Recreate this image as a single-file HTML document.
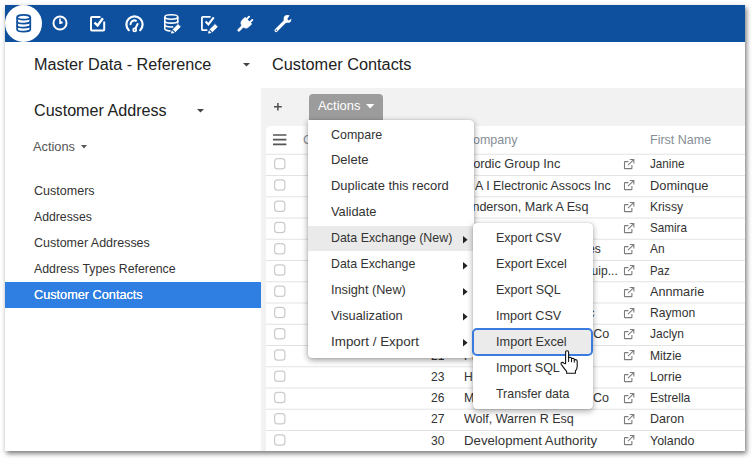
<!DOCTYPE html>
<html lang="en"><head><meta charset="utf-8"><title>Customer Contacts</title>
<style>
html,body{margin:0;padding:0;background:#fff;}
body{width:754px;height:460px;position:relative;overflow:hidden;font-family:"Liberation Sans",Arial,sans-serif;}
.t{position:absolute;white-space:nowrap;line-height:1;transform-origin:0 50%;display:block;}
.r{position:absolute;}
svg{position:absolute;overflow:visible;}
.clip{position:absolute;overflow:hidden;}
</style></head><body>
<div class="r" style="left:5px;top:5px;width:740px;height:446px;background:#fff;box-shadow:1.6px 2.2px 5px .6px rgba(0,0,0,.55);"></div>
<div class="r" style="left:5px;top:5px;width:740px;height:36.6px;background:#0e4f9e;"></div>
<div class="r" style="left:5.1px;top:4.8px;width:36.8px;height:36.8px;border-radius:50%;background:#fff;"></div>
<svg style="left:15.9px;top:14.3px" width="15.4" height="18.6" viewBox="0 0 15.4 18.6">
<g fill="none" stroke="#0e4f9e" stroke-width="1.7">
<ellipse cx="7.7" cy="3.3" rx="6.6" ry="2.4"/>
<path d="M1.1 3.3V15.2C1.1 16.6 4 17.6 7.7 17.6S14.3 16.6 14.3 15.2V3.3"/>
<path d="M1.1 7.2C1.1 8.6 4 9.6 7.7 9.6S14.3 8.6 14.3 7.2M1.1 11.2C1.1 12.6 4 13.6 7.7 13.6S14.3 12.6 14.3 11.2"/>
</g></svg>
<svg style="left:52.1px;top:15.4px" width="16" height="16" viewBox="0 0 16 16">
<circle cx="8" cy="8" r="6.55" fill="none" stroke="#fff" stroke-width="2"/>
<path d="M7.2 3.4H8.8V6L11 7.1L10.3 8.5L8.4 8.9H7.2Z" fill="#fff"/>
</svg>
<svg style="left:90px;top:15px" width="16" height="17" viewBox="0 0 16 17">
<path d="M10.4 2H2Q1 2 1 3V14.4Q1 15.4 2 15.4H13.2Q14.2 15.4 14.2 14.4V6.6" fill="none" stroke="#fff" stroke-width="2"/>
<path d="M4.5 7.6L7.6 10.5L12.9 3.2" fill="none" stroke="#fff" stroke-width="2.4"/>
</svg>
<svg style="left:125px;top:15px" width="19" height="18" viewBox="0 0 19 18">
<path d="M3.8 15.2A8.1 8.1 0 1 1 15.2 15.2" fill="none" stroke="#fff" stroke-width="2.2" stroke-linecap="round"/>
<path d="M5.5 9.3A4 4 0 0 1 10.9 5.7" fill="none" stroke="#fff" stroke-width="2.1" stroke-linecap="round"/>
<path d="M9.7 14.9L12.6 9" fill="none" stroke="#fff" stroke-width="2" stroke-linecap="round"/>
<circle cx="9.7" cy="14.9" r="2.4" fill="#fff"/><circle cx="9.7" cy="14.9" r=".6" fill="#0e4f9e"/>
</svg>
<svg style="left:163.8px;top:14.3px" width="17.4" height="18.8" viewBox="0 0 17.4 18.8">
<path d="M.8 3C.8 1.6 3.7 .8 7.3 .8S13.8 1.6 13.8 3V9.4M.8 3V14.6C.8 16 3.4 16.9 6.6 17" fill="none" stroke="#fff" stroke-width="1.6"/>
<path d="M.8 3C.8 4.4 3.7 5.2 7.3 5.2S13.8 4.4 13.8 3M.8 6.9C.8 8.3 3.7 9.1 7.3 9.1S13.8 8.3 13.8 6.9M.8 10.8C.8 12.2 3.7 13 7.3 13Q8.4 13 9.2 12.9" fill="none" stroke="#fff" stroke-width="1.6"/>
<path d="M14 9.6L17.2 12.8L11.4 18.6L8.2 15.4Z" fill="#fff" stroke="#0e4f9e" stroke-width=".8"/>
<path d="M7.9 16.2L10.6 18.9L6.9 19.6Z" fill="#fff"/>
</svg>
<svg style="left:201px;top:15px" width="17.4" height="18.4" viewBox="0 0 17.4 18.4">
<path d="M9.6 1.9H1.9Q.9 1.9 .9 2.9V14.2Q.9 15.2 1.9 15.2H6.4" fill="none" stroke="#fff" stroke-width="1.8"/>
<path d="M4.6 6.6L7.4 9.4L12.8 2.4" fill="none" stroke="#fff" stroke-width="2.1"/>
<path d="M14 8.6L17.2 11.8L11.4 17.6L8.2 14.4Z" fill="#fff" stroke="#0e4f9e" stroke-width=".8"/>
<path d="M7.9 15.2L10.6 17.9L6.9 18.6Z" fill="#fff"/>
</svg>
<svg style="left:246px;top:23px" width="1" height="1" viewBox="0 0 1 1">
<g transform="rotate(45)">
<path d="M-2.3 -6.7V-3M2.3 -6.7V-3" stroke="#fff" stroke-width="1.9" stroke-linecap="round" fill="none"/>
<path d="M-4.7 -3.4H4.7V.6Q4.7 4.8 0 4.8Q-4.7 4.8 -4.7 .6Z" fill="#fff" stroke="#fff" stroke-width=".6" stroke-linejoin="round"/>
<path d="M0 4V10.2" stroke="#fff" stroke-width="2.7" stroke-linecap="round" fill="none"/>
</g></svg>
<svg style="left:273.6px;top:14.7px" width="17.6" height="17.4" viewBox="0 0 17.6 17.4">
<path d="M2.1 15.4L11.6 5.9" stroke="#fff" stroke-width="3.3" stroke-linecap="round" fill="none"/>
<circle cx="13.5" cy="3.9" r="3.9" fill="#fff"/>
<path d="M13.3 4.1L16.3 -.7L19.6 2.6L14.6 5.4Z" fill="#0e4f9e"/>
<circle cx="2.3" cy="15.2" r=".7" fill="#0e4f9e"/>
</svg>
<span class="t" style="top:56.96px;font-size:16px;color:#222;transform:scaleX(1.0121);left:34.40px;">Master Data - Reference</span>
<span class="t" style="top:102.56px;font-size:16px;color:#222;transform:scaleX(1.0075);left:34.40px;">Customer Address</span>
<span class="t" style="top:56.96px;font-size:16px;color:#222;transform:scaleX(1.0187);left:271.80px;">Customer Contacts</span>
<svg style="left:242.6px;top:63px" width="7" height="3.6" viewBox="0 0 7 3.6"><path d="M0 0H7L3.5 3.6Z" fill="#444"/></svg>
<svg style="left:197px;top:109.3px" width="7" height="3.6" viewBox="0 0 7 3.6"><path d="M0 0H7L3.5 3.6Z" fill="#444"/></svg>
<span class="t" style="top:140.20px;font-size:13px;color:#555;transform:scaleX(0.9852);left:33.30px;">Actions</span>
<svg style="left:81.3px;top:145.3px" width="6" height="3.4" viewBox="0 0 6 3.4"><path d="M0 0H6L3.0 3.4Z" fill="#555"/></svg>
<div class="r" style="left:5px;top:282px;width:256px;height:26px;background:#2f7ee1;"></div>
<span class="t" style="top:184.00px;font-size:13px;color:#333;transform:scaleX(0.9642);left:34.00px;">Customers</span>
<span class="t" style="top:210.00px;font-size:13px;color:#333;transform:scaleX(0.9411);left:34.00px;">Addresses</span>
<span class="t" style="top:236.00px;font-size:13px;color:#333;transform:scaleX(0.9597);left:34.00px;">Customer Addresses</span>
<span class="t" style="top:262.00px;font-size:13px;color:#333;transform:scaleX(0.9482);left:34.00px;">Address Types Reference</span>
<span class="t" style="top:288.00px;font-size:13px;color:#fff;transform:scaleX(0.9770);left:34.00px;text-shadow:0 0 .4px #fff;">Customer Contacts</span>
<div class="r" style="left:261px;top:88px;width:484px;height:363px;background:#f2f2f2;"></div>
<div class="r" style="left:266px;top:126px;width:479px;height:325px;background:#fff;border-radius:5px 0 0 0;"></div>
<svg style="left:274.2px;top:102.9px" width="7.8" height="7.4" viewBox="0 0 7.8 7.4"><path d="M0 3.7H7.8M3.9 0V7.4" stroke="#505050" stroke-width="1.5" fill="none"/></svg>
<svg style="left:273px;top:134.3px" width="13.4" height="12" viewBox="0 0 13.4 12"><path d="M0 1H13.4M0 5.7H13.4M0 10.4H13.4" stroke="#555" stroke-width="1.7" fill="none"/></svg>
<span class="t" style="top:132.90px;font-size:13px;color:#868e96;transform:scaleX(1.0000);left:302.90px;">Contact</span>
<span class="t" style="top:132.90px;font-size:13px;color:#868e96;transform:scaleX(0.9598);left:464.30px;">Company</span>
<span class="t" style="top:132.90px;font-size:13px;color:#868e96;transform:scaleX(0.9629);left:649.60px;">First Name</span>
<svg style="left:0;top:0" width="754" height="460" viewBox="0 0 754 460"><rect x="266" y="153.75" width="479" height="1" fill="#e3e3e3"/><rect x="266" y="175.00" width="479" height="1" fill="#e3e3e3"/><rect x="266" y="196.25" width="479" height="1" fill="#e3e3e3"/><rect x="266" y="217.50" width="479" height="1" fill="#e3e3e3"/><rect x="266" y="238.75" width="479" height="1" fill="#e3e3e3"/><rect x="266" y="260.00" width="479" height="1" fill="#e3e3e3"/><rect x="266" y="281.25" width="479" height="1" fill="#e3e3e3"/><rect x="266" y="302.50" width="479" height="1" fill="#e3e3e3"/><rect x="266" y="323.75" width="479" height="1" fill="#e3e3e3"/><rect x="266" y="345.00" width="479" height="1" fill="#e3e3e3"/><rect x="266" y="366.25" width="479" height="1" fill="#e3e3e3"/><rect x="266" y="387.50" width="479" height="1" fill="#e3e3e3"/><rect x="266" y="408.75" width="479" height="1" fill="#e3e3e3"/><rect x="266" y="430.00" width="479" height="1" fill="#e3e3e3"/><rect x="274.6" y="158.55" width="10.3" height="10.4" rx="3" fill="#fff" stroke="#cbcbcb" stroke-width="1.2"/><rect x="274.6" y="179.80" width="10.3" height="10.4" rx="3" fill="#fff" stroke="#cbcbcb" stroke-width="1.2"/><rect x="274.6" y="201.05" width="10.3" height="10.4" rx="3" fill="#fff" stroke="#cbcbcb" stroke-width="1.2"/><rect x="274.6" y="222.30" width="10.3" height="10.4" rx="3" fill="#fff" stroke="#cbcbcb" stroke-width="1.2"/><rect x="274.6" y="243.55" width="10.3" height="10.4" rx="3" fill="#fff" stroke="#cbcbcb" stroke-width="1.2"/><rect x="274.6" y="264.80" width="10.3" height="10.4" rx="3" fill="#fff" stroke="#cbcbcb" stroke-width="1.2"/><rect x="274.6" y="286.05" width="10.3" height="10.4" rx="3" fill="#fff" stroke="#cbcbcb" stroke-width="1.2"/><rect x="274.6" y="307.30" width="10.3" height="10.4" rx="3" fill="#fff" stroke="#cbcbcb" stroke-width="1.2"/><rect x="274.6" y="328.55" width="10.3" height="10.4" rx="3" fill="#fff" stroke="#cbcbcb" stroke-width="1.2"/><rect x="274.6" y="349.80" width="10.3" height="10.4" rx="3" fill="#fff" stroke="#cbcbcb" stroke-width="1.2"/><rect x="274.6" y="371.05" width="10.3" height="10.4" rx="3" fill="#fff" stroke="#cbcbcb" stroke-width="1.2"/><rect x="274.6" y="392.30" width="10.3" height="10.4" rx="3" fill="#fff" stroke="#cbcbcb" stroke-width="1.2"/><rect x="274.6" y="413.55" width="10.3" height="10.4" rx="3" fill="#fff" stroke="#cbcbcb" stroke-width="1.2"/><rect x="274.6" y="434.80" width="10.3" height="10.4" rx="3" fill="#fff" stroke="#cbcbcb" stroke-width="1.2"/></svg>
<span class="t" style="top:157.45px;font-size:13px;color:#333;transform:scaleX(0.9300);right:309.80px;transform-origin:100% 50%;">2</span>
<span class="t" style="top:157.45px;font-size:13px;color:#333;transform:scaleX(0.9800);left:464.40px;">Nordic Group Inc</span>
<svg style="left:623.6px;top:159.15px" width="10.4" height="10.2" viewBox="0 0 10.4 10.2"><path d="M4.4 2.6H.9Q.5 2.6 .5 3V9.2Q.5 9.6 .9 9.6H7.5Q7.9 9.6 7.9 9.2V6" fill="none" stroke="#7c7c7c" stroke-width="1.1"/><path d="M5.8 .55H9.85V4.4M9.7 .7L4 6.2" fill="none" stroke="#7c7c7c" stroke-width="1.1"/></svg>
<span class="t" style="top:157.45px;font-size:13px;color:#333;transform:scaleX(0.8980);left:649.60px;">Janine</span>
<span class="t" style="top:178.70px;font-size:13px;color:#333;transform:scaleX(0.9300);right:309.80px;transform-origin:100% 50%;">5</span>
<span class="t" style="top:178.70px;font-size:13px;color:#333;transform:scaleX(0.9577);left:464.40px;">E A I Electronic Assocs Inc</span>
<svg style="left:623.6px;top:180.4px" width="10.4" height="10.2" viewBox="0 0 10.4 10.2"><path d="M4.4 2.6H.9Q.5 2.6 .5 3V9.2Q.5 9.6 .9 9.6H7.5Q7.9 9.6 7.9 9.2V6" fill="none" stroke="#7c7c7c" stroke-width="1.1"/><path d="M5.8 .55H9.85V4.4M9.7 .7L4 6.2" fill="none" stroke="#7c7c7c" stroke-width="1.1"/></svg>
<span class="t" style="top:178.70px;font-size:13px;color:#333;transform:scaleX(0.9856);left:649.60px;">Dominque</span>
<span class="t" style="top:199.95px;font-size:13px;color:#333;transform:scaleX(0.9300);right:309.80px;transform-origin:100% 50%;">8</span>
<span class="t" style="top:199.95px;font-size:13px;color:#333;transform:scaleX(0.9672);left:464.40px;">Anderson, Mark A Esq</span>
<svg style="left:623.6px;top:201.65px" width="10.4" height="10.2" viewBox="0 0 10.4 10.2"><path d="M4.4 2.6H.9Q.5 2.6 .5 3V9.2Q.5 9.6 .9 9.6H7.5Q7.9 9.6 7.9 9.2V6" fill="none" stroke="#7c7c7c" stroke-width="1.1"/><path d="M5.8 .55H9.85V4.4M9.7 .7L4 6.2" fill="none" stroke="#7c7c7c" stroke-width="1.1"/></svg>
<span class="t" style="top:199.95px;font-size:13px;color:#333;transform:scaleX(0.9325);left:649.60px;">Krissy</span>
<span class="t" style="top:221.20px;font-size:13px;color:#333;transform:scaleX(0.9300);right:309.80px;transform-origin:100% 50%;">9</span>
<span class="t" style="top:221.20px;font-size:13px;color:#333;transform:scaleX(0.8808);left:464.40px;">Mutual Fish Co</span>
<svg style="left:623.6px;top:222.9px" width="10.4" height="10.2" viewBox="0 0 10.4 10.2"><path d="M4.4 2.6H.9Q.5 2.6 .5 3V9.2Q.5 9.6 .9 9.6H7.5Q7.9 9.6 7.9 9.2V6" fill="none" stroke="#7c7c7c" stroke-width="1.1"/><path d="M5.8 .55H9.85V4.4M9.7 .7L4 6.2" fill="none" stroke="#7c7c7c" stroke-width="1.1"/></svg>
<span class="t" style="top:221.20px;font-size:13px;color:#333;transform:scaleX(0.8986);left:649.60px;">Samira</span>
<span class="t" style="top:242.45px;font-size:13px;color:#333;transform:scaleX(0.9300);right:309.80px;transform-origin:100% 50%;">12</span>
<span class="t" style="top:242.45px;font-size:13px;color:#333;transform:scaleX(0.9300);right:153.00px;transform-origin:100% 50%;">Morlong Associates</span>
<svg style="left:623.6px;top:244.15px" width="10.4" height="10.2" viewBox="0 0 10.4 10.2"><path d="M4.4 2.6H.9Q.5 2.6 .5 3V9.2Q.5 9.6 .9 9.6H7.5Q7.9 9.6 7.9 9.2V6" fill="none" stroke="#7c7c7c" stroke-width="1.1"/><path d="M5.8 .55H9.85V4.4M9.7 .7L4 6.2" fill="none" stroke="#7c7c7c" stroke-width="1.1"/></svg>
<span class="t" style="top:242.45px;font-size:13px;color:#333;transform:scaleX(0.9182);left:649.60px;">An</span>
<span class="t" style="top:263.70px;font-size:13px;color:#333;transform:scaleX(0.9300);right:309.80px;transform-origin:100% 50%;">14</span>
<span class="t" style="top:263.70px;font-size:13px;color:#333;transform:scaleX(0.9300);right:136.00px;transform-origin:100% 50%;">White Sign Div Ctrl Equip...</span>
<svg style="left:623.6px;top:265.4px" width="10.4" height="10.2" viewBox="0 0 10.4 10.2"><path d="M4.4 2.6H.9Q.5 2.6 .5 3V9.2Q.5 9.6 .9 9.6H7.5Q7.9 9.6 7.9 9.2V6" fill="none" stroke="#7c7c7c" stroke-width="1.1"/><path d="M5.8 .55H9.85V4.4M9.7 .7L4 6.2" fill="none" stroke="#7c7c7c" stroke-width="1.1"/></svg>
<span class="t" style="top:263.70px;font-size:13px;color:#333;transform:scaleX(0.8750);left:649.60px;">Paz</span>
<span class="t" style="top:284.95px;font-size:13px;color:#333;transform:scaleX(0.9300);right:309.80px;transform-origin:100% 50%;">16</span>
<span class="t" style="top:284.95px;font-size:13px;color:#333;transform:scaleX(0.9300);left:464.40px;">Tipiak Inc</span>
<svg style="left:623.6px;top:286.65px" width="10.4" height="10.2" viewBox="0 0 10.4 10.2"><path d="M4.4 2.6H.9Q.5 2.6 .5 3V9.2Q.5 9.6 .9 9.6H7.5Q7.9 9.6 7.9 9.2V6" fill="none" stroke="#7c7c7c" stroke-width="1.1"/><path d="M5.8 .55H9.85V4.4M9.7 .7L4 6.2" fill="none" stroke="#7c7c7c" stroke-width="1.1"/></svg>
<span class="t" style="top:284.95px;font-size:13px;color:#333;transform:scaleX(0.9742);left:649.60px;">Annmarie</span>
<span class="t" style="top:306.20px;font-size:13px;color:#333;transform:scaleX(0.9300);right:309.80px;transform-origin:100% 50%;">18</span>
<span class="t" style="top:306.20px;font-size:13px;color:#333;transform:scaleX(0.9455);left:464.40px;">Seaboard Securities Inc</span>
<svg style="left:623.6px;top:307.9px" width="10.4" height="10.2" viewBox="0 0 10.4 10.2"><path d="M4.4 2.6H.9Q.5 2.6 .5 3V9.2Q.5 9.6 .9 9.6H7.5Q7.9 9.6 7.9 9.2V6" fill="none" stroke="#7c7c7c" stroke-width="1.1"/><path d="M5.8 .55H9.85V4.4M9.7 .7L4 6.2" fill="none" stroke="#7c7c7c" stroke-width="1.1"/></svg>
<span class="t" style="top:306.20px;font-size:13px;color:#333;transform:scaleX(0.9337);left:649.60px;">Raymon</span>
<span class="t" style="top:327.45px;font-size:13px;color:#333;transform:scaleX(0.9300);right:309.80px;transform-origin:100% 50%;">20</span>
<span class="t" style="top:327.45px;font-size:13px;color:#333;transform:scaleX(0.9668);left:464.40px;">Judah Caster &amp; Wheel Co</span>
<svg style="left:623.6px;top:329.15px" width="10.4" height="10.2" viewBox="0 0 10.4 10.2"><path d="M4.4 2.6H.9Q.5 2.6 .5 3V9.2Q.5 9.6 .9 9.6H7.5Q7.9 9.6 7.9 9.2V6" fill="none" stroke="#7c7c7c" stroke-width="1.1"/><path d="M5.8 .55H9.85V4.4M9.7 .7L4 6.2" fill="none" stroke="#7c7c7c" stroke-width="1.1"/></svg>
<span class="t" style="top:327.45px;font-size:13px;color:#333;transform:scaleX(0.9227);left:649.60px;">Jaclyn</span>
<span class="t" style="top:348.70px;font-size:13px;color:#333;transform:scaleX(0.9300);right:309.80px;transform-origin:100% 50%;">21</span>
<span class="t" style="top:348.70px;font-size:13px;color:#333;transform:scaleX(0.9300);left:464.40px;">Printing Dimensions</span>
<svg style="left:623.6px;top:350.4px" width="10.4" height="10.2" viewBox="0 0 10.4 10.2"><path d="M4.4 2.6H.9Q.5 2.6 .5 3V9.2Q.5 9.6 .9 9.6H7.5Q7.9 9.6 7.9 9.2V6" fill="none" stroke="#7c7c7c" stroke-width="1.1"/><path d="M5.8 .55H9.85V4.4M9.7 .7L4 6.2" fill="none" stroke="#7c7c7c" stroke-width="1.1"/></svg>
<span class="t" style="top:348.70px;font-size:13px;color:#333;transform:scaleX(0.9300);left:649.60px;">Mitzie</span>
<span class="t" style="top:369.95px;font-size:13px;color:#333;transform:scaleX(0.9300);right:309.80px;transform-origin:100% 50%;">23</span>
<span class="t" style="top:369.95px;font-size:13px;color:#333;transform:scaleX(0.9300);left:464.40px;">Hermar Inc</span>
<svg style="left:623.6px;top:371.65px" width="10.4" height="10.2" viewBox="0 0 10.4 10.2"><path d="M4.4 2.6H.9Q.5 2.6 .5 3V9.2Q.5 9.6 .9 9.6H7.5Q7.9 9.6 7.9 9.2V6" fill="none" stroke="#7c7c7c" stroke-width="1.1"/><path d="M5.8 .55H9.85V4.4M9.7 .7L4 6.2" fill="none" stroke="#7c7c7c" stroke-width="1.1"/></svg>
<span class="t" style="top:369.95px;font-size:13px;color:#333;transform:scaleX(0.9538);left:649.60px;">Lorrie</span>
<span class="t" style="top:391.20px;font-size:13px;color:#333;transform:scaleX(0.9300);right:309.80px;transform-origin:100% 50%;">26</span>
<span class="t" style="top:391.20px;font-size:13px;color:#333;transform:scaleX(0.9642);left:464.40px;">Marking Devices Pubg Co</span>
<svg style="left:623.6px;top:392.9px" width="10.4" height="10.2" viewBox="0 0 10.4 10.2"><path d="M4.4 2.6H.9Q.5 2.6 .5 3V9.2Q.5 9.6 .9 9.6H7.5Q7.9 9.6 7.9 9.2V6" fill="none" stroke="#7c7c7c" stroke-width="1.1"/><path d="M5.8 .55H9.85V4.4M9.7 .7L4 6.2" fill="none" stroke="#7c7c7c" stroke-width="1.1"/></svg>
<span class="t" style="top:391.20px;font-size:13px;color:#333;transform:scaleX(0.9297);left:649.60px;">Estrella</span>
<span class="t" style="top:412.45px;font-size:13px;color:#333;transform:scaleX(0.9300);right:309.80px;transform-origin:100% 50%;">27</span>
<span class="t" style="top:412.45px;font-size:13px;color:#333;transform:scaleX(0.9620);left:464.40px;">Wolf, Warren R Esq</span>
<svg style="left:623.6px;top:414.15px" width="10.4" height="10.2" viewBox="0 0 10.4 10.2"><path d="M4.4 2.6H.9Q.5 2.6 .5 3V9.2Q.5 9.6 .9 9.6H7.5Q7.9 9.6 7.9 9.2V6" fill="none" stroke="#7c7c7c" stroke-width="1.1"/><path d="M5.8 .55H9.85V4.4M9.7 .7L4 6.2" fill="none" stroke="#7c7c7c" stroke-width="1.1"/></svg>
<span class="t" style="top:412.45px;font-size:13px;color:#333;transform:scaleX(0.9631);left:649.60px;">Daron</span>
<span class="t" style="top:433.70px;font-size:13px;color:#333;transform:scaleX(0.9300);right:309.80px;transform-origin:100% 50%;">30</span>
<span class="t" style="top:433.70px;font-size:13px;color:#333;transform:scaleX(1.0169);left:464.40px;">Development Authority</span>
<svg style="left:623.6px;top:435.4px" width="10.4" height="10.2" viewBox="0 0 10.4 10.2"><path d="M4.4 2.6H.9Q.5 2.6 .5 3V9.2Q.5 9.6 .9 9.6H7.5Q7.9 9.6 7.9 9.2V6" fill="none" stroke="#7c7c7c" stroke-width="1.1"/><path d="M5.8 .55H9.85V4.4M9.7 .7L4 6.2" fill="none" stroke="#7c7c7c" stroke-width="1.1"/></svg>
<span class="t" style="top:433.70px;font-size:13px;color:#333;transform:scaleX(0.9545);left:649.60px;">Yolando</span>
<div class="r" style="left:308.6px;top:94.4px;width:74.6px;height:25.4px;background:#9c9c9c;border-radius:4px 4px 0 0;"></div>
<span class="t" style="top:98.87px;font-size:13.5px;color:#fff;transform:scaleX(0.9577);left:317.90px;">Actions</span>
<svg style="left:365.9px;top:104.2px" width="8.4" height="4.4" viewBox="0 0 8.4 4.4"><path d="M0 0H8.4L4.2 4.4Z" fill="#fff"/></svg>
<div class="r" style="left:308px;top:119.8px;width:166px;height:238px;background:#fff;border-radius:0 4px 4px 4px;box-shadow:0 2px 6px rgba(0,0,0,.4),0 0 1px rgba(0,0,0,.3);"></div>
<div class="r" style="left:308px;top:226px;width:166px;height:25px;background:#eaeaea;"></div>
<span class="t" style="top:127.50px;font-size:13px;color:#333;transform:scaleX(0.9576);left:330.80px;">Compare</span>
<span class="t" style="top:153.44px;font-size:13px;color:#333;transform:scaleX(0.9979);left:330.80px;">Delete</span>
<span class="t" style="top:179.38px;font-size:13px;color:#333;transform:scaleX(0.9933);left:330.80px;">Duplicate this record</span>
<span class="t" style="top:205.32px;font-size:13px;color:#333;transform:scaleX(0.9867);left:330.80px;">Validate</span>
<span class="t" style="top:231.26px;font-size:13px;color:#333;transform:scaleX(0.9538);left:330.80px;">Data Exchange (New)</span>
<svg style="left:463px;top:235.66px" width="4.6" height="7.6" viewBox="0 0 4.6 7.6"><path d="M0 0L4.6 3.8L0 7.6Z" fill="#222"/></svg>
<span class="t" style="top:257.20px;font-size:13px;color:#333;transform:scaleX(0.9483);left:330.80px;">Data Exchange</span>
<svg style="left:463px;top:261.60px" width="4.6" height="7.6" viewBox="0 0 4.6 7.6"><path d="M0 0L4.6 3.8L0 7.6Z" fill="#222"/></svg>
<span class="t" style="top:283.14px;font-size:13px;color:#333;transform:scaleX(0.9768);left:330.80px;">Insight (New)</span>
<svg style="left:463px;top:287.54px" width="4.6" height="7.6" viewBox="0 0 4.6 7.6"><path d="M0 0L4.6 3.8L0 7.6Z" fill="#222"/></svg>
<span class="t" style="top:309.08px;font-size:13px;color:#333;transform:scaleX(0.9856);left:330.80px;">Visualization</span>
<svg style="left:463px;top:313.48px" width="4.6" height="7.6" viewBox="0 0 4.6 7.6"><path d="M0 0L4.6 3.8L0 7.6Z" fill="#222"/></svg>
<span class="t" style="top:335.02px;font-size:13px;color:#333;transform:scaleX(1.0311);left:330.80px;">Import / Export</span>
<svg style="left:463px;top:339.42px" width="4.6" height="7.6" viewBox="0 0 4.6 7.6"><path d="M0 0L4.6 3.8L0 7.6Z" fill="#222"/></svg>
<div class="r" style="left:473px;top:223px;width:119.6px;height:186px;background:#fff;border-radius:4px;box-shadow:0 2px 6px rgba(0,0,0,.35),0 0 1px rgba(0,0,0,.3);"></div>
<div class="r" style="left:471.8px;top:327.8px;width:117px;height:24px;border:2px solid #3a7be0;border-radius:5px;background:#ebebeb;"></div>
<span class="t" style="top:231.26px;font-size:13px;color:#333;transform:scaleX(0.9615);left:495.60px;">Export CSV</span>
<span class="t" style="top:257.20px;font-size:13px;color:#333;transform:scaleX(0.9689);left:495.60px;">Export Excel</span>
<span class="t" style="top:283.14px;font-size:13px;color:#333;transform:scaleX(0.9629);left:495.60px;">Export SQL</span>
<span class="t" style="top:309.08px;font-size:13px;color:#333;transform:scaleX(0.9720);left:495.60px;">Import CSV</span>
<span class="t" style="top:335.02px;font-size:13px;color:#333;transform:scaleX(0.9786);left:495.60px;">Import Excel</span>
<span class="t" style="top:360.96px;font-size:13px;color:#333;transform:scaleX(0.9599);left:495.60px;">Import SQL</span>
<span class="t" style="top:386.90px;font-size:13px;color:#333;transform:scaleX(0.9540);left:495.60px;">Transfer data</span>
<svg style="left:559.5px;top:350px" width="18.5" height="24" viewBox="0 0 18.5 24">
<path d="M5.6 13.6V2.4Q5.6 .8 7.1 .8Q8.6 .8 8.6 2.4V8.2Q8.6 7.2 10 7.2Q11.5 7.2 11.5 8.6V9.2Q11.6 8.2 12.9 8.2Q14.3 8.3 14.3 9.7V10.4Q14.5 9.5 15.7 9.6Q17.2 9.8 17.2 11.3V16.2Q17.2 19.2 15.4 21V23.2H6.6V21.3Q4.6 19.2 1.4 14.6Q.5 13.2 1.7 12.5Q2.9 12 3.9 13.2Z" fill="#fff" stroke="#111" stroke-width="1.1" stroke-linejoin="round"/>
<path d="M8.6 8.2V12M11.5 9.2V12.2M14.3 10.4V12.6" stroke="#111" stroke-width="1" fill="none"/>
</svg>
</body></html>
